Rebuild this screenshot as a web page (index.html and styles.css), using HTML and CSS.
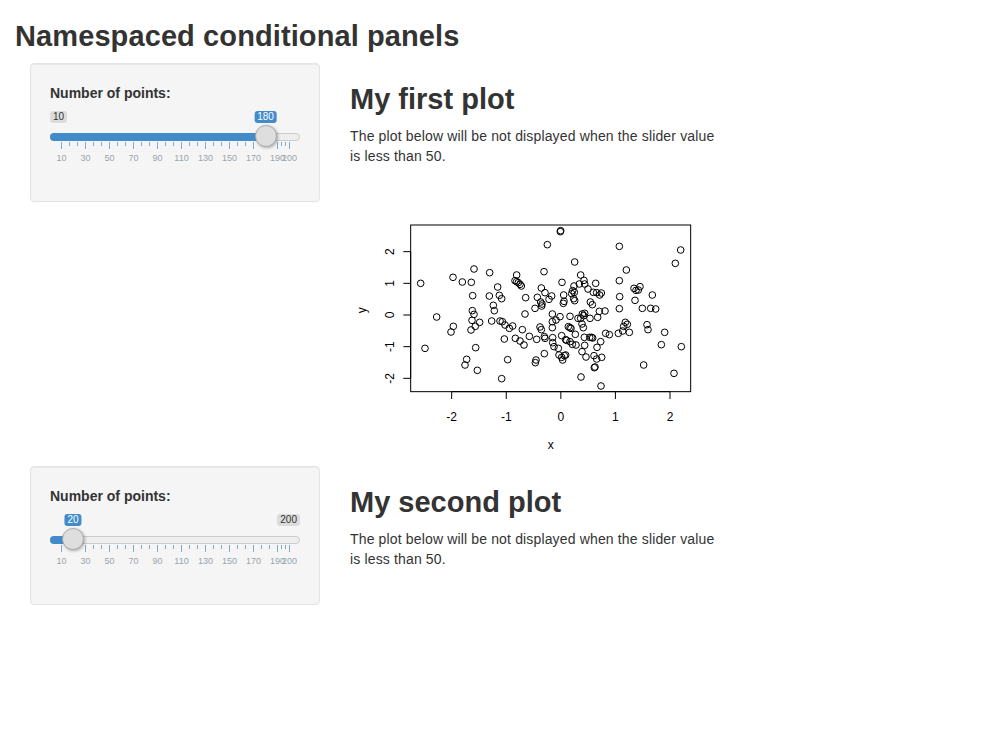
FILE: index.html
```html
<!DOCTYPE html>
<html>
<head>
<meta charset="utf-8">
<title>Namespaced conditional panels</title>
<link rel="stylesheet" href="styles.css">
</head>
<body>
<div class="page">
  <h2 class="title">Namespaced conditional panels</h2>

  <div class="row">
    <div class="sidebar">
      <div class="well">
        <div class="form-group">
          <label class="control-label">Number of points:</label>
          <div class="slider">
            <div class="irs-line"></div>
            <div class="irs-bar" style="width:216px"></div>
            <span class="irs-tag irs-min">10</span>
            <span class="irs-tag irs-single" style="left:215.5px">180</span>
            <div class="irs-grid">
              <span class="tick" style="left:11px"></span><span class="tick small" style="left:19px"></span><span class="tick small" style="left:27px"></span>
              <span class="tick" style="left:35px"></span><span class="tick small" style="left:43px"></span><span class="tick small" style="left:51px"></span>
              <span class="tick" style="left:59px"></span><span class="tick small" style="left:67px"></span><span class="tick small" style="left:75px"></span>
              <span class="tick" style="left:83px"></span><span class="tick small" style="left:91px"></span><span class="tick small" style="left:99px"></span>
              <span class="tick" style="left:107px"></span><span class="tick small" style="left:115px"></span><span class="tick small" style="left:123px"></span>
              <span class="tick" style="left:131px"></span><span class="tick small" style="left:139px"></span><span class="tick small" style="left:147px"></span>
              <span class="tick" style="left:155px"></span><span class="tick small" style="left:163px"></span><span class="tick small" style="left:171px"></span>
              <span class="tick" style="left:179px"></span><span class="tick small" style="left:187px"></span><span class="tick small" style="left:195px"></span>
              <span class="tick" style="left:203px"></span><span class="tick small" style="left:211px"></span><span class="tick small" style="left:219px"></span>
              <span class="tick" style="left:227px"></span><span class="tick small" style="left:231px"></span><span class="tick small" style="left:235px"></span>
              <span class="tick" style="left:239px"></span>
              <span class="gtext" style="left:11.5px">10</span>
              <span class="gtext" style="left:35.5px">30</span>
              <span class="gtext" style="left:59.5px">50</span>
              <span class="gtext" style="left:83.5px">70</span>
              <span class="gtext" style="left:107.5px">90</span>
              <span class="gtext" style="left:131.5px">110</span>
              <span class="gtext" style="left:155.5px">130</span>
              <span class="gtext" style="left:179.5px">150</span>
              <span class="gtext" style="left:203.5px">170</span>
              <span class="gtext" style="left:227.5px">190</span>
              <span class="gtext" style="left:239.5px">200</span>
            </div>
            <div class="irs-handle" style="left:205px"></div>
          </div>
        </div>
      </div>
    </div>
    <div class="main">
      <h2 class="heading">My first plot</h2>
      <div class="note">The plot below will be not displayed when the slider value is less than 50.</div>
      <svg class="plot" width="370" height="300" viewBox="0 -147 1110 900">
        <g class="axes">
          <rect x="182" y="30" width="840" height="500"/>
          <path d="M305 530H960M305 530V552M468.75 530V552M632.5 530V552M796.25 530V552M960 530V552"/>
          <path d="M182 110V490M182 110H160M182 205H160M182 300H160M182 395H160M182 490H160"/>
        </g>
        <g class="labels">
          <text x="305" y="619">-2</text>
          <text x="468.75" y="619">-1</text>
          <text x="632.5" y="619">0</text>
          <text x="796.25" y="619">1</text>
          <text x="960" y="619">2</text>
          <text x="602" y="703">x</text>
          <text x="133" y="110" transform="rotate(-90 133 110)">2</text>
          <text x="133" y="205" transform="rotate(-90 133 205)">1</text>
          <text x="133" y="300" transform="rotate(-90 133 300)">0</text>
          <text x="133" y="395" transform="rotate(-90 133 395)">-1</text>
          <text x="133" y="490" transform="rotate(-90 133 490)">-2</text>
          <text x="48" y="286" transform="rotate(-90 48 286)">y</text>
        </g>
        <g class="pts">
          <circle cx="632" cy="47" r="10"/><circle cx="631" cy="50" r="10"/><circle cx="592" cy="89" r="10"/><circle cx="808" cy="94" r="10"/>
          <circle cx="992" cy="105" r="10"/><circle cx="976" cy="145" r="10"/><circle cx="674" cy="141" r="10"/><circle cx="829" cy="165" r="10"/>
          <circle cx="372" cy="162" r="10"/><circle cx="419" cy="173" r="10"/><circle cx="582" cy="170" r="10"/><circle cx="309" cy="187" r="10"/>
          <circle cx="337" cy="201" r="10"/><circle cx="364" cy="202" r="10"/><circle cx="212" cy="205" r="10"/><circle cx="443" cy="216" r="10"/>
          <circle cx="500" cy="180" r="10"/><circle cx="495" cy="197" r="10"/><circle cx="500" cy="200" r="10"/><circle cx="505" cy="203" r="10"/>
          <circle cx="510" cy="208" r="10"/><circle cx="514" cy="213" r="10"/>
          <circle cx="692" cy="180" r="10"/><circle cx="702" cy="196" r="10"/><circle cx="688" cy="207" r="10"/><circle cx="704" cy="207" r="10"/>
          <circle cx="636" cy="202" r="10"/><circle cx="737" cy="205" r="10"/>
          <circle cx="672" cy="213" r="10"/><circle cx="668" cy="227" r="10"/><circle cx="673" cy="232" r="10"/><circle cx="665" cy="236" r="10"/>
          <circle cx="714" cy="222" r="10"/><circle cx="730" cy="232" r="10"/><circle cx="740" cy="233" r="10"/><circle cx="749" cy="240" r="10"/>
          <circle cx="754" cy="234" r="10"/><circle cx="574" cy="219" r="10"/><circle cx="585" cy="233" r="10"/>
          <circle cx="808" cy="197" r="10"/><circle cx="852" cy="220" r="10"/><circle cx="858" cy="226" r="10"/><circle cx="865" cy="225" r="10"/>
          <circle cx="870" cy="215" r="10"/><circle cx="907" cy="240" r="10"/><circle cx="809" cy="245" r="10"/><circle cx="855" cy="256" r="10"/>
          <circle cx="368" cy="242" r="10"/><circle cx="418" cy="243" r="10"/><circle cx="448" cy="241" r="10"/><circle cx="455" cy="251" r="10"/>
          <circle cx="527" cy="248" r="10"/><circle cx="562" cy="247" r="10"/><circle cx="605" cy="243" r="10"/><circle cx="597" cy="253" r="10"/>
          <circle cx="572" cy="261" r="10"/><circle cx="576" cy="267" r="10"/>
          <circle cx="641" cy="240" r="10"/><circle cx="640" cy="265" r="10"/><circle cx="642" cy="259" r="10"/><circle cx="671" cy="251" r="10"/>
          <circle cx="674" cy="257" r="10"/><circle cx="721" cy="261" r="10"/><circle cx="727" cy="269" r="10"/>
          <circle cx="430" cy="271" r="10"/><circle cx="433" cy="287" r="10"/><circle cx="367" cy="287" r="10"/><circle cx="372" cy="298" r="10"/>
          <circle cx="555" cy="280" r="10"/><circle cx="575" cy="273" r="10"/>
          <circle cx="808" cy="281" r="10"/><circle cx="877" cy="280" r="10"/><circle cx="902" cy="280" r="10"/><circle cx="917" cy="282" r="10"/>
          <circle cx="748" cy="289" r="10"/><circle cx="765" cy="288" r="10"/><circle cx="743" cy="307" r="10"/><circle cx="720" cy="310" r="10"/>
          <circle cx="697" cy="297" r="10"/><circle cx="704" cy="295" r="10"/><circle cx="701" cy="302" r="10"/><circle cx="692" cy="310" r="10"/>
          <circle cx="684" cy="310" r="10"/><circle cx="660" cy="304" r="10"/><circle cx="630" cy="305" r="10"/><circle cx="607" cy="297" r="10"/>
          <circle cx="525" cy="297" r="10"/><circle cx="260" cy="306" r="10"/>
          <circle cx="366" cy="316" r="10"/><circle cx="376" cy="334" r="10"/><circle cx="363" cy="345" r="10"/><circle cx="389" cy="322" r="10"/>
          <circle cx="310" cy="334" r="10"/><circle cx="303" cy="351" r="10"/>
          <circle cx="425" cy="318" r="10"/><circle cx="450" cy="318" r="10"/><circle cx="457" cy="320" r="10"/><circle cx="465" cy="330" r="10"/>
          <circle cx="478" cy="340" r="10"/><circle cx="488" cy="333" r="10"/><circle cx="517" cy="344" r="10"/>
          <circle cx="570" cy="336" r="10"/><circle cx="574" cy="344" r="10"/><circle cx="607" cy="320" r="10"/><circle cx="607" cy="338" r="10"/>
          <circle cx="618" cy="315" r="10"/><circle cx="655" cy="335" r="10"/><circle cx="663" cy="340" r="10"/><circle cx="660" cy="338" r="10"/>
          <circle cx="696" cy="327" r="10"/><circle cx="700" cy="338" r="10"/>
          <circle cx="826" cy="322" r="10"/><circle cx="832" cy="328" r="10"/><circle cx="821" cy="334" r="10"/><circle cx="838" cy="352" r="10"/>
          <circle cx="805" cy="355" r="10"/><circle cx="818" cy="348" r="10"/><circle cx="891" cy="329" r="10"/><circle cx="894" cy="344" r="10"/>
          <circle cx="944" cy="352" r="10"/><circle cx="767" cy="355" r="10"/><circle cx="778" cy="359" r="10"/>
          <circle cx="463" cy="372" r="10"/><circle cx="496" cy="370" r="10"/><circle cx="510" cy="378" r="10"/><circle cx="522" cy="390" r="10"/>
          <circle cx="538" cy="364" r="10"/><circle cx="560" cy="373" r="10"/><circle cx="583" cy="365" r="10"/><circle cx="585" cy="370" r="10"/>
          <circle cx="608" cy="368" r="10"/><circle cx="608" cy="383" r="10"/><circle cx="612" cy="395" r="10"/><circle cx="635" cy="362" r="10"/>
          <circle cx="647" cy="374" r="10"/><circle cx="650" cy="376" r="10"/><circle cx="660" cy="380" r="10"/><circle cx="667" cy="388" r="10"/>
          <circle cx="678" cy="390" r="10"/><circle cx="676" cy="358" r="10"/>
          <circle cx="703" cy="367" r="10"/><circle cx="719" cy="367" r="10"/><circle cx="725" cy="367" r="10"/><circle cx="728" cy="369" r="10"/>
          <circle cx="752" cy="380" r="10"/><circle cx="704" cy="391" r="10"/><circle cx="741" cy="397" r="10"/>
          <circle cx="225" cy="400" r="10"/><circle cx="377" cy="398" r="10"/>
          <circle cx="583" cy="416" r="10"/><circle cx="625" cy="400" r="10"/><circle cx="627" cy="420" r="10"/><circle cx="635" cy="427" r="10"/>
          <circle cx="643" cy="422" r="10"/><circle cx="647" cy="420" r="10"/><circle cx="638" cy="435" r="10"/>
          <circle cx="696" cy="410" r="10"/><circle cx="708" cy="426" r="10"/><circle cx="732" cy="422" r="10"/><circle cx="740" cy="432" r="10"/>
          <circle cx="755" cy="427" r="10"/><circle cx="934" cy="389" r="10"/><circle cx="994" cy="395" r="10"/>
          <circle cx="350" cy="433" r="10"/><circle cx="345" cy="450" r="10"/><circle cx="382" cy="466" r="10"/><circle cx="473" cy="434" r="10"/>
          <circle cx="558" cy="435" r="10"/><circle cx="556" cy="443" r="10"/>
          <circle cx="735" cy="456" r="10"/><circle cx="733" cy="458" r="10"/><circle cx="693" cy="486" r="10"/><circle cx="455" cy="491" r="10"/>
          <circle cx="753" cy="513" r="10"/><circle cx="881" cy="450" r="10"/><circle cx="972" cy="475" r="10"/>
        </g>
      </svg>
    </div>
  </div>

  <div class="row">
    <div class="sidebar">
      <div class="well">
        <div class="form-group">
          <label class="control-label">Number of points:</label>
          <div class="slider">
            <div class="irs-line"></div>
            <div class="irs-bar" style="width:24px"></div>
            <span class="irs-tag irs-max">200</span>
            <span class="irs-tag irs-single" style="left:23px">20</span>
            <div class="irs-grid">
              <span class="tick" style="left:11px"></span><span class="tick small" style="left:19px"></span><span class="tick small" style="left:27px"></span>
              <span class="tick" style="left:35px"></span><span class="tick small" style="left:43px"></span><span class="tick small" style="left:51px"></span>
              <span class="tick" style="left:59px"></span><span class="tick small" style="left:67px"></span><span class="tick small" style="left:75px"></span>
              <span class="tick" style="left:83px"></span><span class="tick small" style="left:91px"></span><span class="tick small" style="left:99px"></span>
              <span class="tick" style="left:107px"></span><span class="tick small" style="left:115px"></span><span class="tick small" style="left:123px"></span>
              <span class="tick" style="left:131px"></span><span class="tick small" style="left:139px"></span><span class="tick small" style="left:147px"></span>
              <span class="tick" style="left:155px"></span><span class="tick small" style="left:163px"></span><span class="tick small" style="left:171px"></span>
              <span class="tick" style="left:179px"></span><span class="tick small" style="left:187px"></span><span class="tick small" style="left:195px"></span>
              <span class="tick" style="left:203px"></span><span class="tick small" style="left:211px"></span><span class="tick small" style="left:219px"></span>
              <span class="tick" style="left:227px"></span><span class="tick small" style="left:231px"></span><span class="tick small" style="left:235px"></span>
              <span class="tick" style="left:239px"></span>
              <span class="gtext" style="left:11.5px">10</span>
              <span class="gtext" style="left:35.5px">30</span>
              <span class="gtext" style="left:59.5px">50</span>
              <span class="gtext" style="left:83.5px">70</span>
              <span class="gtext" style="left:107.5px">90</span>
              <span class="gtext" style="left:131.5px">110</span>
              <span class="gtext" style="left:155.5px">130</span>
              <span class="gtext" style="left:179.5px">150</span>
              <span class="gtext" style="left:203.5px">170</span>
              <span class="gtext" style="left:227.5px">190</span>
              <span class="gtext" style="left:239.5px">200</span>
            </div>
            <div class="irs-handle" style="left:12px"></div>
          </div>
        </div>
      </div>
    </div>
    <div class="main">
      <h2 class="heading">My second plot</h2>
      <div class="note">The plot below will be not displayed when the slider value is less than 50.</div>
    </div>
  </div>
</div>
</body>
</html>
```

FILE: styles.css
```css
html, body {
  margin: 0;
  padding: 0;
  background: #fff;
}

body {
  font-family: "Liberation Sans", Arial, sans-serif;
  font-size: 14px;
  line-height: 20px;
  color: #333;
}

.page {
  padding: 0 15px;
}

.title,
.heading {
  font-size: 29px;
  line-height: 33px;
  font-weight: bold;
  margin: 20px 0 10px;
  color: #333;
}

.title {
  letter-spacing: 0.1px;
}

.row {
  display: flex;
  align-items: flex-start;
}

.sidebar {
  flex: 0 0 320px;
  box-sizing: border-box;
  padding: 0 15px;
}

.main {
  flex: 0 0 400px;
  box-sizing: border-box;
  padding: 0 15px;
}

.note {
  line-height: 20px;
  letter-spacing: 0.15px;
}

.plot {
  display: block;
}

.well {
  background: #f5f5f5;
  border: 1px solid #e3e3e3;
  border-radius: 4px;
  padding: 19px;
  margin-bottom: 20px;
  box-shadow: inset 0 1px 1px rgba(0, 0, 0, 0.05);
}

.form-group {
  margin-bottom: 15px;
}

.control-label {
  display: block;
  font-weight: bold;
  margin-bottom: 5px;
  line-height: 20px;
}

.slider {
  position: relative;
  height: 59px;
}

.irs-line {
  position: absolute;
  top: 25px;
  left: 0;
  right: 0;
  height: 8px;
  box-sizing: border-box;
  border: 1px solid #ccc;
  background: #eee;
  border-radius: 16px;
}

.irs-bar {
  position: absolute;
  top: 25px;
  left: 0;
  height: 8px;
  background: #428bca;
  border-radius: 16px 0 0 16px;
}

.irs-handle {
  position: absolute;
  top: 17px;
  width: 22px;
  height: 22px;
  box-sizing: border-box;
  border: 1px solid #ababab;
  background: #dedede;
  border-radius: 50%;
  box-shadow: 1px 1px 3px rgba(0, 0, 0, 0.3);
}

.irs-tag {
  position: absolute;
  top: 3px;
  font-size: 10px;
  line-height: 10px;
  padding: 1px 3px;
  border-radius: 3px;
  white-space: nowrap;
}

.irs-min {
  left: 0;
  background: rgba(0, 0, 0, 0.1);
  color: #333;
}

.irs-max {
  right: 0;
  background: rgba(0, 0, 0, 0.1);
  color: #333;
}

.irs-single {
  background: #428bca;
  color: #fff;
  transform: translateX(-50%);
}

.irs-grid {
  position: absolute;
  left: 0;
  right: 0;
  top: 33px;
  height: 26px;
}

.tick {
  position: absolute;
  top: 1px;
  width: 1px;
  height: 7px;
  background: #7eaad6;
}

.tick.small {
  height: 4px;
}

.gtext {
  position: absolute;
  top: 12px;
  font-size: 9px;
  line-height: 10px;
  color: #99a4ac;
  transform: translateX(-50%);
  white-space: nowrap;
}

.axes rect,
.axes path {
  fill: none;
  stroke: #000;
  stroke-width: 3;
}

.labels text {
  font-family: "Liberation Sans", Arial, sans-serif;
  font-size: 36px;
  fill: #000;
  text-anchor: middle;
}

.pts circle {
  fill: none;
  stroke: #000;
  stroke-width: 3;
}
```
